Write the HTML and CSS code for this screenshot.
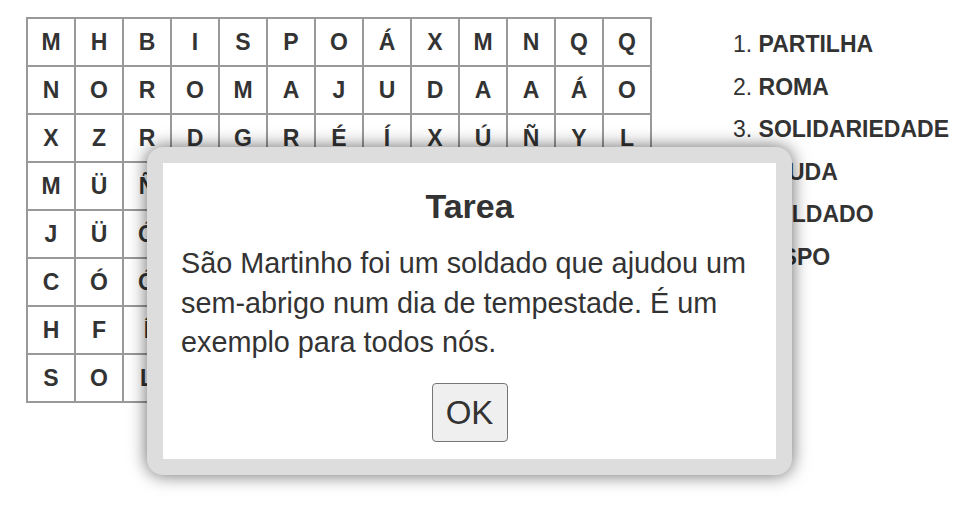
FILE: index.html
```html
<!DOCTYPE html>
<html lang="pt">
<head>
<meta charset="utf-8">
<title>Sopa de letras</title>
<link rel="stylesheet" href="styles.css">
</head>
<body>
<div class="page">
  <div class="grid">
    <div class="cell">M</div><div class="cell">H</div><div class="cell">B</div><div class="cell">I</div><div class="cell">S</div><div class="cell">P</div><div class="cell">O</div><div class="cell">Á</div><div class="cell">X</div><div class="cell">M</div><div class="cell">N</div><div class="cell">Q</div><div class="cell">Q</div>
    <div class="cell">N</div><div class="cell">O</div><div class="cell">R</div><div class="cell">O</div><div class="cell">M</div><div class="cell">A</div><div class="cell">J</div><div class="cell">U</div><div class="cell">D</div><div class="cell">A</div><div class="cell">A</div><div class="cell">Á</div><div class="cell">O</div>
    <div class="cell">X</div><div class="cell">Z</div><div class="cell">R</div><div class="cell">D</div><div class="cell">G</div><div class="cell">R</div><div class="cell">É</div><div class="cell">Í</div><div class="cell">X</div><div class="cell">Ú</div><div class="cell">Ñ</div><div class="cell">Y</div><div class="cell">L</div>
    <div class="cell">M</div><div class="cell">Ü</div><div class="cell">Ñ</div><div class="cell">K</div><div class="cell">E</div><div class="cell">T</div><div class="cell">W</div><div class="cell">Ç</div><div class="cell">Z</div><div class="cell">Õ</div><div class="cell">B</div><div class="cell">V</div><div class="cell">F</div>
    <div class="cell">J</div><div class="cell">Ü</div><div class="cell">Ó</div><div class="cell">F</div><div class="cell">U</div><div class="cell">I</div><div class="cell">Ê</div><div class="cell">Q</div><div class="cell">V</div><div class="cell">Z</div><div class="cell">K</div><div class="cell">W</div><div class="cell">P</div>
    <div class="cell">C</div><div class="cell">Ó</div><div class="cell">Ó</div><div class="cell">S</div><div class="cell">O</div><div class="cell">L</div><div class="cell">D</div><div class="cell">A</div><div class="cell">D</div><div class="cell">O</div><div class="cell">Ç</div><div class="cell">G</div><div class="cell">Â</div>
    <div class="cell">H</div><div class="cell">F</div><div class="cell">Í</div><div class="cell">V</div><div class="cell">B</div><div class="cell">H</div><div class="cell">Ã</div><div class="cell">Y</div><div class="cell">E</div><div class="cell">N</div><div class="cell">J</div><div class="cell">Õ</div><div class="cell">T</div>
    <div class="cell">S</div><div class="cell">O</div><div class="cell">L</div><div class="cell">I</div><div class="cell">D</div><div class="cell">A</div><div class="cell">R</div><div class="cell">I</div><div class="cell">E</div><div class="cell">D</div><div class="cell">A</div><div class="cell">D</div><div class="cell">E</div>
  </div>
  <ol class="words">
    <li><span class="num">1.</span> <b>PARTILHA</b></li>
    <li><span class="num">2.</span> <b>ROMA</b></li>
    <li><span class="num">3.</span> <b>SOLIDARIEDADE</b></li>
    <li><span class="num">4.</span> <b>AJUDA</b></li>
    <li><span class="num">5.</span> <b>SOLDADO</b></li>
    <li><span class="num">6.</span> <b>BISPO</b></li>
  </ol>
</div>
<div class="modal">
  <div class="modal-inner">
    <h2 class="modal-title">Tarea</h2>
    <p class="modal-text">São Martinho foi um soldado que ajudou um sem-abrigo num dia de tempestade. É um exemplo para todos nós.</p>
    <div class="modal-actions"><button class="ok">OK</button></div>
  </div>
</div>
</body>
</html>
```
FILE: styles.css
```css
html, body {
  margin: 0;
  padding: 0;
  background: #fff;
  font-family: "Liberation Sans", Arial, sans-serif;
  color: #333;
}
.page {
  display: flex;
  align-items: flex-start;
  gap: 81px;
  padding: 17px 0 0 26px;
}
.grid {
  display: grid;
  grid-template-columns: repeat(13, 48px);
  grid-auto-rows: 48px;
  border-left: 2px solid #999;
  border-top: 2px solid #999;
}
.cell {
  border-right: 2px solid #999;
  border-bottom: 2px solid #999;
  display: flex;
  align-items: center;
  justify-content: center;
  font-weight: bold;
  font-size: 23px;
  color: #333;
}
.words {
  list-style: none;
  margin: 6px 0 0 0;
  padding: 0;
  font-size: 23px;
  line-height: 42.6px;
  color: #333;
  white-space: nowrap;
}
.words b {
  font-weight: bold;
}
.modal {
  position: absolute;
  left: 147px;
  top: 147px;
  width: 645px;
  box-sizing: border-box;
  background: #ddd;
  padding: 16px;
  border-radius: 16px;
  box-shadow: 0 0 18px rgba(0, 0, 0, 0.6);
}
.modal-inner {
  background: #fff;
  padding: 24px 18px 17px 18px;
}
.modal-title {
  margin: 0 0 18px 0;
  font-size: 34px;
  line-height: 39px;
  font-weight: bold;
  text-align: center;
  color: #333;
}
.modal-text {
  margin: 0 0 20px 0;
  font-size: 28.8px;
  line-height: 39.5px;
  color: #333;
}
.modal-actions {
  display: flex;
  justify-content: center;
}
.ok {
  font-family: "Liberation Sans", Arial, sans-serif;
  font-size: 33px;
  line-height: 37px;
  padding: 10px 10px;
  color: #333;
  background: #efefef;
  border: 1px solid #767676;
  border-radius: 4px;
  width: 76px;
  height: 59px;
  box-sizing: border-box;
}
```
